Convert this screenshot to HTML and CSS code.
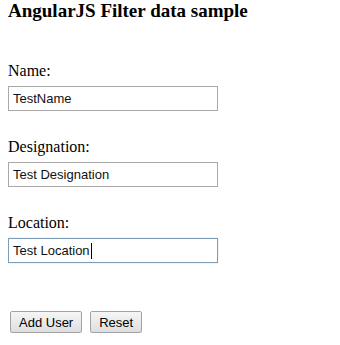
FILE: index.html
```html
<!DOCTYPE html>
<html lang="en">
<head>
  <meta charset="UTF-8">
  <title>AngularJS Filter data sample</title>
  <link rel="stylesheet" href="styles.css">
</head>
<body>
  <h3 class="title">AngularJS Filter data sample</h3>

  <form class="user-form">
    <div class="field">
      <label for="name">Name:</label>
      <input id="name" class="text-box" type="text" value="TestName">
    </div>

    <div class="field">
      <label for="designation">Designation:</label>
      <input id="designation" class="text-box" type="text" value="Test Designation">
    </div>

    <div class="field">
      <label for="location">Location:</label>
      <div class="box-wrap">
        <input id="location" class="text-box focused" type="text" value="Test Location">
        <span class="caret"></span>
      </div>
    </div>

    <div class="actions">
      <button type="button" class="btn">Add User</button>
      <button type="reset" class="btn">Reset</button>
    </div>
  </form>
</body>
</html>
```

FILE: styles.css
```css
body {
  margin: 0 8px;
  background: white;
  font-family: "Liberation Serif", "Times New Roman", serif;
  color: black;
}

.title {
  margin: 0;
  font-size: 19px;
  font-weight: bold;
  line-height: 22px;
}

.user-form {
  margin-top: 40px;
}

.field {
  margin-bottom: 27px;
}

.field label {
  display: block;
  font-size: 16px;
  line-height: 18px;
  margin-bottom: 6px;
}

.box-wrap {
  position: relative;
  width: 210px;
}

.text-box {
  display: block;
  box-sizing: border-box;
  width: 210px;
  height: 25px;
  margin: 0;
  padding: 0 4px;
  border: 1px solid #a9a9a9;
  background: white;
  font-family: "Liberation Sans", Arial, sans-serif;
  font-size: 13px;
  color: #111;
  outline: none;
}

.text-box.focused {
  border: 1px solid #7f9db9;
  box-shadow: 0 0 1px #a8c0dc;
}

.caret {
  position: absolute;
  left: 83px;
  top: 5px;
  width: 1px;
  height: 16px;
  background: black;
}

.actions {
  padding-top: 21px;
  padding-left: 2px;
  display: flex;
  gap: 8px;
}

.btn {
  height: 22px;
  margin: 0;
  padding: 0 8px;
  border: 1px solid #a3a3a3;
  border-radius: 2px;
  background: linear-gradient(#f6f6f6, #dedede);
  font-family: "Liberation Sans", Arial, sans-serif;
  font-size: 13px;
  color: black;
}
```
